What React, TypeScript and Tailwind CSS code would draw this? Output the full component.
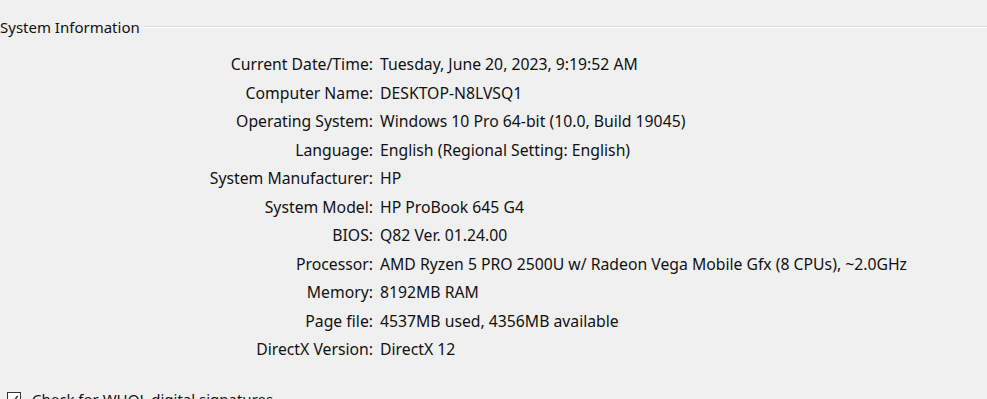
const rows: [string, string][] = [
  ["Current Date/Time:", "Tuesday, June 20, 2023, 9:19:52 AM"],
  ["Computer Name:", "DESKTOP-N8LVSQ1"],
  ["Operating System:", "Windows 10 Pro 64-bit (10.0, Build 19045)"],
  ["Language:", "English (Regional Setting: English)"],
  ["System Manufacturer:", "HP"],
  ["System Model:", "HP ProBook 645 G4"],
  ["BIOS:", "Q82 Ver. 01.24.00"],
  ["Processor:", "AMD Ryzen 5 PRO 2500U w/ Radeon Vega Mobile Gfx (8 CPUs), ~2.0GHz"],
  ["Memory:", "8192MB RAM"],
  ["Page file:", "4537MB used, 4356MB available"],
  ["DirectX Version:", "DirectX 12"],
];

export default function App() {
  return (
    <div className="w-[987px] h-[399px] overflow-hidden bg-[#f0f0f0] text-[15px] text-[#111] font-['Noto_Sans','Open_Sans',sans-serif]">
      <div className="flex items-center pt-[17px] h-[37px]">
        <span className="leading-[20px]">System Information</span>
        <div className="flex-1 ml-[4px] border-t border-[#dcdcdc] border-b-white border-b h-0" />
      </div>
      <div className="grid grid-cols-[373px_1fr] pt-[13px] text-[15.75px]">
        {rows.map(([label, value]) => (
          <div key={label} className="contents">
            <div className="text-right h-[28.5px] leading-[28.5px] whitespace-nowrap">{label}</div>
            <div className="pl-[7px] h-[28.5px] leading-[28.5px] whitespace-nowrap">{value}</div>
          </div>
        ))}
      </div>
      <div className="flex items-center gap-[11px] pl-[7px] mt-[25px]">
        <div className="w-[14px] h-[14px] border border-[#333] bg-white flex items-center justify-center">
          <svg width="10" height="10" viewBox="0 0 10 10">
            <path d="M1.5 5.2 L4 7.8 L8.8 2" fill="none" stroke="#222" strokeWidth="1.3" />
          </svg>
        </div>
        <span className="leading-[20px]">Check for WHQL digital signatures</span>
      </div>
    </div>
  );
}
